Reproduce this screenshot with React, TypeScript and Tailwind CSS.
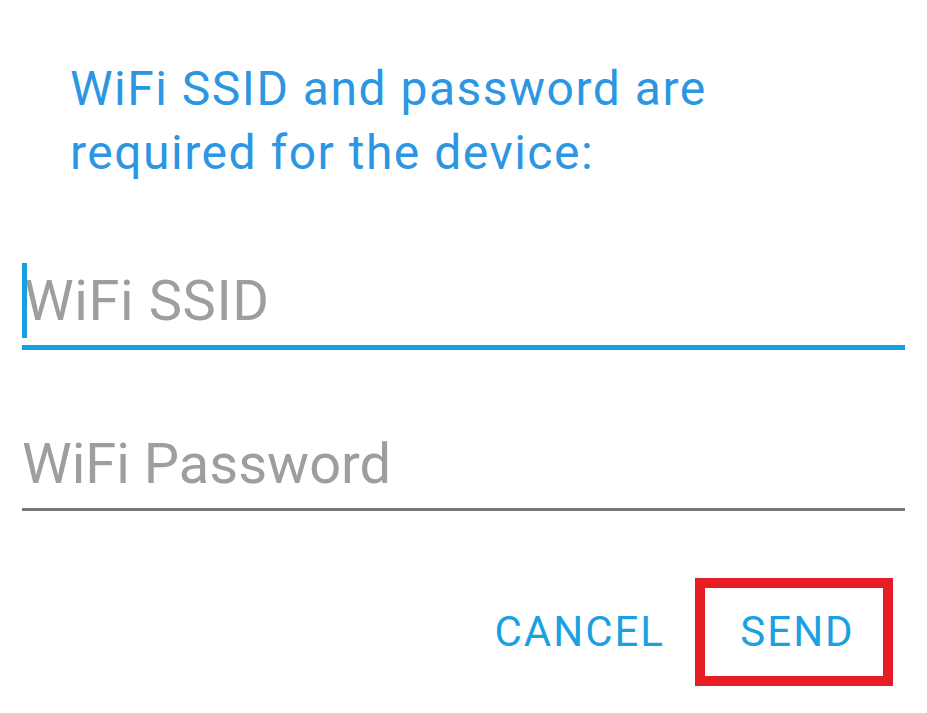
import React from 'react';

const App = () => {
  return (
    <div className="w-[927px] h-[713px] bg-white overflow-hidden font-['Roboto',sans-serif]">
      {/* Dialog message */}
      <div className="pt-[57px] pl-[70px] pr-[30px]">
        <p className="text-[48px] leading-[64px] tracking-[1.5px] text-[#2d96e2]">
          WiFi SSID and password are
          <br />
          required for the device:
        </p>
      </div>

      {/* SSID field - focused */}
      <div className="mt-[78px] mx-[22px] relative h-[87px] border-b-[5px] border-[#17a0e0]">
        <span className="absolute left-0 top-0 w-[5px] h-[75px] bg-[#17a0e0]" />
        <div className="pl-[2px] text-[56px] leading-[76px] tracking-[0.6px] text-[#9e9e9e]">WiFi SSID</div>
      </div>

      {/* Password field */}
      <div className="mt-[76px] mx-[22px] h-[85px] border-b-[3px] border-[#767676]">
        <div className="text-[56px] leading-[76px] text-[#9e9e9e]">WiFi Password</div>
      </div>

      {/* Actions */}
      <div className="mt-[67px] pr-[34px] flex flex-row justify-end items-center">
        <button className="text-[42px] leading-[50px] tracking-[2px] text-[#1ba0e0] mr-[30px]">CANCEL</button>
        <button className="w-[198px] h-[108px] border-[10px] border-[#e51d25] flex items-center justify-center pl-[7px] text-[42px] leading-[50px] tracking-[2px] text-[#1ba0e0]">
          SEND
        </button>
      </div>
    </div>
  );
};

export default App;
